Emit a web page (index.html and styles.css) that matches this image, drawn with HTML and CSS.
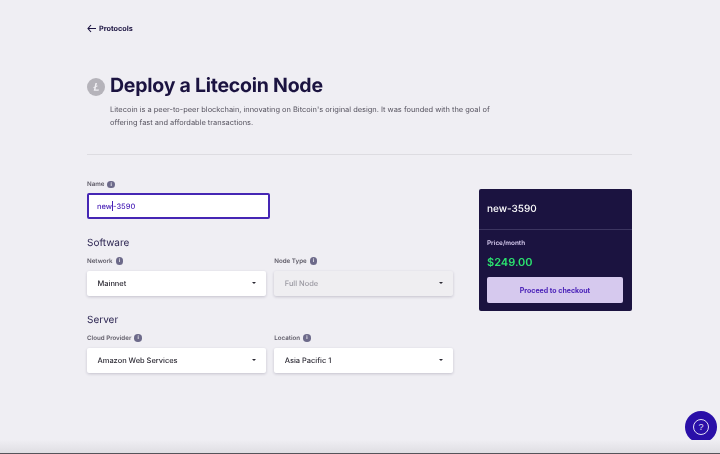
FILE: index.html
```html
<!DOCTYPE html>
<html lang="en">
<head>
    <meta charset="UTF-8">
    <title>Deploy a Litecoin Node</title>
    <link rel="stylesheet" href="styles.css">
</head>
<body>

<div class="page">
    <a class="backLink" href="#">
        <svg width="9" height="9" viewBox="0 0 9 9"><path d="M4 1 L1 4.5 L4 8 M1 4.5 H9" fill="none" stroke="#1b1340" stroke-width="1.1"/></svg>
        Protocols
    </a>

    <div class="header">
        <div class="titleRow">
            <svg class="coin" width="18" height="18" viewBox="0 0 18 18">
                <circle cx="9" cy="9" r="9" fill="#b5b3ba"/>
                <path d="M8.4 5 H10 L9.3 8 L10.7 7.5 L10.4 8.6 L9 9.1 L8.5 11.4 H12 L11.6 12.8 H6.7 L7.4 9.8 L6.3 10.2 L6.6 9.1 L7.6 8.7 Z" fill="#f0eff3"/>
            </svg>
            <h1>Deploy a Litecoin Node</h1>
        </div>
        <p class="intro">Litecoin is a peer-to-peer blockchain, innovating on Bitcoin's original design. It was founded with the goal of offering fast and affordable transactions.</p>
    </div>

    <hr class="divider">

    <div class="content">
        <form class="nodeForm">
            <div class="labelRow">Name <span class="info">i</span></div>
            <div class="nameInput">new<span class="caret"></span>-3590</div>

            <h2>Software</h2>
            <div class="fieldRow">
                <div class="field">
                    <div class="labelRow">Network <span class="info">i</span></div>
                    <div class="selectBox">Mainnet <span class="arrow"></span></div>
                </div>
                <div class="field">
                    <div class="labelRow">Node Type <span class="info">i</span></div>
                    <div class="selectBox disabled">Full Node <span class="arrow"></span></div>
                </div>
            </div>

            <h2>Server</h2>
            <div class="fieldRow">
                <div class="field">
                    <div class="labelRow">Cloud Provider <span class="info">i</span></div>
                    <div class="selectBox">Amazon Web Services <span class="arrow"></span></div>
                </div>
                <div class="field">
                    <div class="labelRow">Location <span class="info">i</span></div>
                    <div class="selectBox">Asia Pacific 1 <span class="arrow"></span></div>
                </div>
            </div>
        </form>

        <aside class="summary">
            <div class="summaryName">new-3590</div>
            <div class="summaryBody">
                <div class="priceLabel">Price/month</div>
                <div class="price">$249.00</div>
                <button type="button" class="checkout">Proceed to checkout</button>
            </div>
        </aside>
    </div>
</div>

<button type="button" class="helpButton" aria-label="Help">
    <span class="helpRing">?</span>
</button>

<div class="bottomEdge"></div>

</body>
</html>
```

FILE: styles.css
```css
html, body {
    margin: 0;
    padding: 0;
    height: 100%;
    overflow: hidden;
}

body {
    font-family: Inter, "Noto Sans", sans-serif;
    background-color: #efeef3;
    color: #1b1340;
    text-rendering: geometricPrecision;
}

.page {
    padding: 23px 88px 0 87px;
    will-change: transform; /* grayscale text, no colour fringes */
}

.backLink {
    display: flex;
    align-items: center;
    gap: 3px;
    height: 11px;
    font-size: 7.3px;
    font-weight: 700;
    color: #1b1340;
    text-decoration: none;
}

.header {
    margin-top: 39px;
}

.titleRow {
    display: flex;
    align-items: center;
    gap: 5px;
}

.coin {
    margin-top: 3px;
}

h1 {
    margin: 0;
    font-size: 19.5px;
    line-height: 24px;
    font-weight: 700;
    letter-spacing: -0.25px;
}

.intro {
    margin: 6px 0 0 23px;
    max-width: 392px;
    font-size: 7.45px;
    line-height: 13px;
    color: #56535f;
}

.divider {
    margin: 25px 0 0;
    border: 0;
    border-top: 1px solid #dddce1;
}

.content {
    display: flex;
    justify-content: space-between;
    margin-top: 25px;
}

.nodeForm {
    width: 366px;
}

.labelRow {
    display: flex;
    align-items: center;
    gap: 3px;
    height: 9px;
    font-size: 6.2px;
    font-weight: 600;
    color: #5f5c68;
}

.info {
    display: inline-flex;
    align-items: center;
    justify-content: center;
    width: 7.5px;
    height: 7.5px;
    border-radius: 50%;
    background-color: #6d6a8a;
    color: #efeef3;
    font-size: 5px;
    font-weight: 700;
}

.nameInput {
    display: flex;
    align-items: center;
    box-sizing: border-box;
    width: 183px;
    height: 26px;
    margin-top: 4px;
    padding-left: 8px;
    background-color: #fff;
    border: 2px solid #4526b4;
    border-radius: 2px;
    font-size: 7.5px;
    font-weight: 500;
    color: #4a22b8;
}

.caret {
    display: inline-block;
    width: 1px;
    height: 10px;
    background-color: #4a22b8;
}

h2 {
    margin: 17.5px 0 7px;
    font-size: 10px;
    line-height: 13px;
    font-weight: 400;
    color: #2a2350;
}

.fieldRow {
    display: flex;
    gap: 8.5px;
}

.field {
    width: 178.75px;
}

.selectBox {
    display: flex;
    align-items: center;
    justify-content: space-between;
    box-sizing: border-box;
    height: 25.5px;
    margin-top: 5px;
    padding: 0 10px 0 10.5px;
    background-color: #fff;
    border-radius: 2px;
    box-shadow: 0 1px 3px rgba(30, 20, 60, 0.2);
    font-size: 7.45px;
    font-weight: 500;
    color: #2b2933;
}

.selectBox.disabled {
    background-color: #efeef1;
    color: #9b99a2;
}

.arrow {
    width: 0;
    height: 0;
    border-left: 2.5px solid transparent;
    border-right: 2.5px solid transparent;
    border-top: 2.5px solid #2b2933;
}

.summary {
    box-sizing: border-box;
    width: 153px;
    height: 122px;
    margin-top: 9px;
    background-color: #1b1340;
    border-radius: 2px;
    color: #fff;
}

.summaryName {
    height: 40px;
    padding-left: 8px;
    line-height: 40px;
    font-size: 10px;
    font-weight: 500;
    border-bottom: 1px solid #3c3560;
}

.summaryBody {
    padding: 8.5px 8px 0;
}

.priceLabel {
    font-size: 6.4px;
    line-height: 9px;
    font-weight: 600;
    color: #d8cdf0;
}

.price {
    margin-top: 7px;
    font-size: 11px;
    line-height: 14px;
    font-weight: 600;
    color: #2be36f;
}

.checkout {
    display: block;
    width: 136px;
    height: 26px;
    margin-top: 8.5px;
    padding: 0;
    border: none;
    border-radius: 2px;
    background-color: #d6c9ee;
    color: #4a22b8;
    font-family: inherit;
    font-size: 7px;
    font-weight: 700;
}

.helpButton {
    position: absolute;
    right: 3px;
    bottom: 11px;
    display: flex;
    align-items: center;
    justify-content: center;
    width: 32px;
    height: 32px;
    padding: 0;
    border: none;
    border-radius: 50%;
    background-color: #2a0fa8;
}

.helpRing {
    display: flex;
    align-items: center;
    justify-content: center;
    box-sizing: border-box;
    width: 16px;
    height: 16px;
    border: 1px solid #e4e0f5;
    border-radius: 50%;
    color: #e4e0f5;
    font-family: inherit;
    font-size: 9px;
}

.bottomEdge {
    position: absolute;
    left: 0;
    right: 0;
    bottom: 0;
    height: 14px;
    background: linear-gradient(to bottom, #efeef3, #dfdee3 93%, #55545a 93%);
}
```
